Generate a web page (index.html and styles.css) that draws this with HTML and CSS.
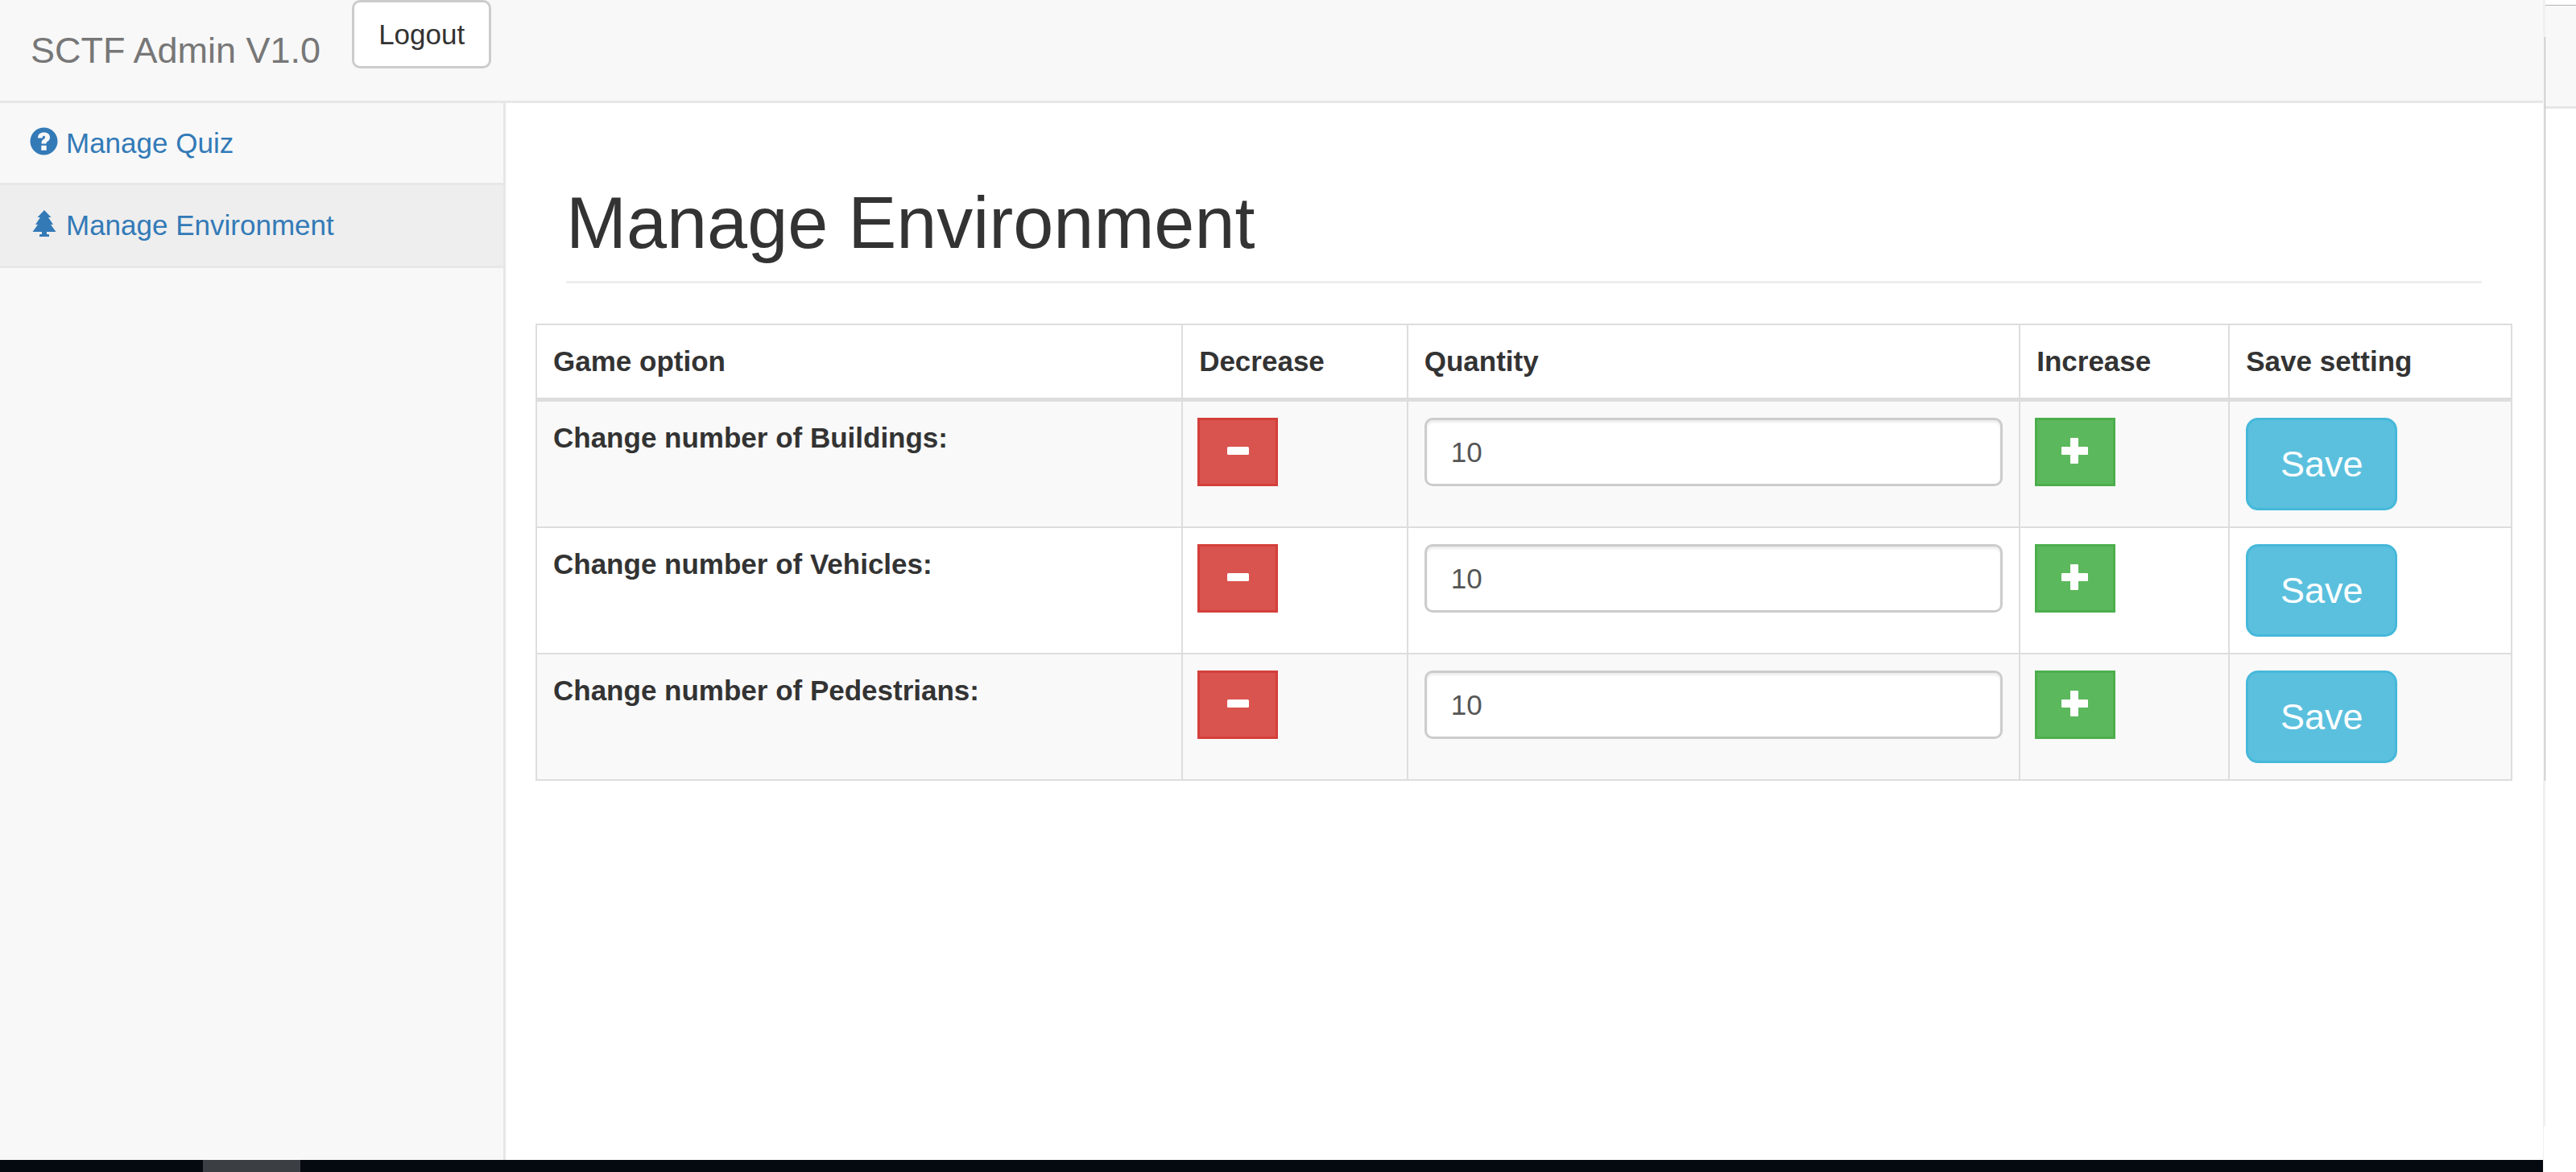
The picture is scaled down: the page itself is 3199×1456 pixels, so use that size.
FILE: index.html
```html
<!DOCTYPE html>
<html lang="en">
<head>
<meta charset="utf-8">
<title>SCTF Admin V1.0</title>
<link rel="stylesheet" href="styles.css">
</head>
<body>
<svg class="sprite" aria-hidden="true">
  <symbol id="question" viewBox="0 0 35 35"><path fill-rule="evenodd" d="M17.500 0.500a17 17 0 1 0 0 34a17 17 0 1 0 0-34zM14.300 22.800h6.400v6h-6.400zM10 13.500c0-4.500 3-7 7.700-7c4.500 0 7.300 2.500 7.300 6.200c0 2.700-1.300 3.900-3 5.100c-1.100.8-1.500 1.300-1.500 2.700h-6c0-3.400 1-4.400 2.600-5.500c1.300-1 1.900-1.600 1.900-2.600c0-1-.6-1.600-1.600-1.600c-1.200 0-1.700.8-1.700 2.700z"/></symbol>
  <symbol id="tree" viewBox="0 0 35 35"><path d="M18 1l8.500 9h-3.500l6 9h-3l6.500 9h-11.500v3h2q1 0 1 1v2H12v-2q0-1 1-1h2v-3H3.500l6.500-9H7l6-9H9.500z"/></symbol>
  <symbol id="minus" viewBox="0 0 35 35"><rect x="4" y="11" width="27" height="10" rx="1.500"/></symbol>
  <symbol id="plus" viewBox="0 0 35 35"><path d="M12 0h8q1 0 1 1v10h11q1 0 1 1v8q0 1-1 1H21v10q0 1-1 1h-8q-1 0-1-1V21H1q-1 0-1-1v-8q0-1 1-1h10V1q0-1 1-1z"/></symbol>
</svg>
<div class="desktop">
  <div class="window">
    <header class="navbar">
      <a class="brand" href="#">SCTF Admin V1.0</a>
      <button class="btn btn-default" type="button">Logout</button>
    </header>
    <div class="body">
      <nav class="sidebar">
        <a class="nav-link" href="#"><svg class="icon"><use href="#question"/></svg> Manage Quiz</a>
        <a class="nav-link active" href="#"><svg class="icon"><use href="#tree"/></svg> Manage Environment</a>
      </nav>
      <main class="content">
        <h1 class="page-header">Manage Environment</h1>
        <table class="table">
          <colgroup><col class="c-option"><col class="c-down"><col class="c-qty"><col class="c-up"><col class="c-save"></colgroup>
          <thead>
            <tr><th>Game option</th><th>Decrease</th><th>Quantity</th><th>Increase</th><th>Save setting</th></tr>
          </thead>
          <tbody>
            <tr>
              <td><label for="buildings">Change number of Buildings:</label></td>
              <td><button class="btn btn-step btn-danger" type="button" aria-label="Decrease"><svg class="icon"><use href="#minus"/></svg></button></td>
              <td><input class="field" id="buildings" type="text" value="10"></td>
              <td><button class="btn btn-step btn-success" type="button" aria-label="Increase"><svg class="icon"><use href="#plus"/></svg></button></td>
              <td><button class="btn btn-save" type="button">Save</button></td>
            </tr>
            <tr>
              <td><label for="vehicles">Change number of Vehicles:</label></td>
              <td><button class="btn btn-step btn-danger" type="button" aria-label="Decrease"><svg class="icon"><use href="#minus"/></svg></button></td>
              <td><input class="field" id="vehicles" type="text" value="10"></td>
              <td><button class="btn btn-step btn-success" type="button" aria-label="Increase"><svg class="icon"><use href="#plus"/></svg></button></td>
              <td><button class="btn btn-save" type="button">Save</button></td>
            </tr>
            <tr>
              <td><label for="pedestrians">Change number of Pedestrians:</label></td>
              <td><button class="btn btn-step btn-danger" type="button" aria-label="Decrease"><svg class="icon"><use href="#minus"/></svg></button></td>
              <td><input class="field" id="pedestrians" type="text" value="10"></td>
              <td><button class="btn btn-step btn-success" type="button" aria-label="Increase"><svg class="icon"><use href="#plus"/></svg></button></td>
              <td><button class="btn btn-save" type="button">Save</button></td>
            </tr>
          </tbody>
        </table>
      </main>
    </div>
    <footer class="taskbar"><div class="task"></div></footer>
  </div>
  <div class="edge"><div class="edge-top"></div><div class="edge-line"></div><div class="edge-rest"></div><div class="edge-end"></div></div>
  <div class="behind"><div class="behind-bar"></div></div>
</div>
</body>
</html>
```
FILE: styles.css
```css
* { box-sizing: border-box; }

body {
  margin: 0;
  background: #fff;
  color: #333;
  font: 35px/50px "Liberation Sans", Arial, sans-serif;
}

.sprite { display: none; }
.icon { width: 35px; height: 35px; fill: currentColor; }

.desktop { display: flex; min-height: 100vh; }
.window { flex: 1; display: flex; flex-direction: column; }

.navbar {
  display: flex;
  align-items: flex-start;
  height: 128px;
  background: #f8f8f8;
  border-bottom: 3px solid #e7e7e7;
}
.brand {
  padding: 38px 39px 38px 38px;
  font-size: 45px;
  color: #777;
  text-decoration: none;
}

.btn {
  height: 85px;
  padding: 0 30px;
  border: 3px solid;
  border-radius: 10px;
  font: inherit;
}
.btn-default { background: #fff; border-color: #ccc; color: #333; }

.body { flex: 1; display: flex; }
.sidebar {
  width: 628px;
  background: #f8f8f8;
  border-right: 3px solid #e7e7e7;
}
.nav-link {
  display: flex;
  align-items: center;
  gap: 10px;
  height: 102px;
  padding: 0 37px;
  border-bottom: 3px solid #e7e7e7;
  color: #337ab7;
  text-decoration: none;
}
.nav-link .icon { margin-bottom: 5px; }
.nav-link.active { height: 103px; background: #eee; }

.content { flex: 1; padding: 0 38px 0 37px; }
.page-header {
  margin: 100px 38px 50px;
  padding-bottom: 22px;
  border-bottom: 3px solid #eee;
  font-size: 90px;
  line-height: 99px;
  font-weight: 400;
}

.table {
  width: 100%;
  table-layout: fixed;
  border-collapse: collapse;
}
.c-option { width: 32.7%; }
.c-down { width: 11.4%; }
.c-qty { width: 31%; }
.c-up { width: 10.6%; }
.c-save { width: 14.3%; }
.table th, .table td {
  padding: 20px;
  border: 2px solid #ddd;
  text-align: left;
  vertical-align: top;
}
.table thead th { border-bottom-width: 5px; }
.table tbody tr:nth-child(odd) { background: #f9f9f9; }
.table label { display: block; font-weight: 700; }
.table .btn, .table .field { display: block; }

.table .btn-step {
  display: flex;
  align-items: center;
  justify-content: center;
  width: 100px;
  margin-left: -2px;
  padding: 0;
  border-radius: 0;
  color: #fff;
}
.btn-danger { background: #d9534f; border-color: #d43f3a; }
.btn-success { background: #5cb85c; border-color: #4cae4c; }
.btn-save {
  width: 188px;
  height: 115px;
  border-radius: 15px;
  background: #5bc0de;
  border-color: #46b8da;
  color: #fff;
  font-size: 45px;
}
.field {
  width: 100%;
  height: 85px;
  padding: 0 30px;
  border: 3px solid #ccc;
  border-radius: 10px;
  background: #fff;
  box-shadow: inset 0 3px 3px rgba(0, 0, 0, .075);
  color: #555;
  font: inherit;
}

.taskbar { height: 15px; padding-left: 252px; background: #050a10; }
.task { width: 121px; height: 15px; background: #3b3e43; }

/* sliver of the window behind */
.edge { width: 3px; display: flex; flex-direction: column; }
.edge-top { height: 46px; background: #f0f0f0; }
.edge-line { height: 924px; background: #f0f0f0; border-right: 1px solid #b8b8b8; }
.edge-rest { height: 429px; background: #f0f0f0; }
.edge-end { flex: 1; border-left: 1px solid #f0f0f0; }
.behind { width: 38px; padding-top: 6px; }
.behind-bar {
  height: 129px;
  background: #f8f8f8;
  border-top: 1px solid #b4b4b4;
  border-bottom: 3px solid #e7e7e7;
}
```
